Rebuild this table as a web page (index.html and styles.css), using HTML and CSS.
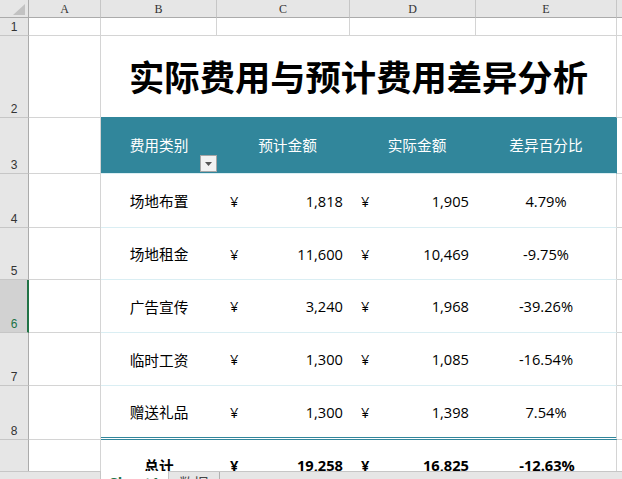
FILE: index.html
```html
<!DOCTYPE html>
<html lang="zh-CN">
<head>
<meta charset="utf-8">
<title>实际费用与预计费用差异分析</title>
<link rel="stylesheet" href="styles.css">
</head>
<body>
<div class="app">
  <div class="sheet">
    <div class="corner"><svg width="12" height="11" viewBox="0 0 12 11"><polygon points="12,0 12,11 0,11" fill="#c2c2c2"/></svg></div>
    <div class="ch">A</div>
    <div class="ch">B</div>
    <div class="ch">C</div>
    <div class="ch">D</div>
    <div class="ch">E</div>
    <div class="ch ch-f"></div>

    <div class="rh">1</div>
    <div class="c"></div>
    <div class="c"></div>
    <div class="c"></div>
    <div class="c"></div>
    <div class="c"></div>
    <div class="c f"></div>

    <div class="rh">2</div>
    <div class="c"></div>
    <div class="title">实际费用与预计费用差异分析</div>
    <div class="c f"></div>

    <div class="rh">3</div>
    <div class="c"></div>
    <div class="th th-b">费用类别<span class="filter"><svg width="7" height="4" viewBox="0 0 7 4"><polygon points="0,0 7,0 3.5,4" fill="#555"/></svg></span></div>
    <div class="th th-c">预计金额</div>
    <div class="th th-d">实际金额</div>
    <div class="th th-e">差异百分比</div>
    <div class="c f"></div>

    <div class="rh">4</div>
    <div class="c"></div>
    <div class="td name">场地布置</div>
    <div class="td money m-c"><span>¥</span><span>1,818</span></div>
    <div class="td money m-d"><span>¥</span><span>1,905</span></div>
    <div class="td pct">4.79%</div>
    <div class="c f"></div>

    <div class="rh">5</div>
    <div class="c"></div>
    <div class="td name">场地租金</div>
    <div class="td money m-c"><span>¥</span><span>11,600</span></div>
    <div class="td money m-d"><span>¥</span><span>10,469</span></div>
    <div class="td pct">-9.75%</div>
    <div class="c f"></div>

    <div class="rh sel">6</div>
    <div class="c"></div>
    <div class="td name">广告宣传</div>
    <div class="td money m-c"><span>¥</span><span>3,240</span></div>
    <div class="td money m-d"><span>¥</span><span>1,968</span></div>
    <div class="td pct">-39.26%</div>
    <div class="c f"></div>

    <div class="rh">7</div>
    <div class="c"></div>
    <div class="td name">临时工资</div>
    <div class="td money m-c"><span>¥</span><span>1,300</span></div>
    <div class="td money m-d"><span>¥</span><span>1,085</span></div>
    <div class="td pct">-16.54%</div>
    <div class="c f"></div>

    <div class="rh">8</div>
    <div class="c"></div>
    <div class="td last name">赠送礼品</div>
    <div class="td last money m-c"><span>¥</span><span>1,300</span></div>
    <div class="td last money m-d"><span>¥</span><span>1,398</span></div>
    <div class="td last pct">7.54%</div>
    <div class="c f"></div>

    <div class="rh">9</div>
    <div class="c"></div>
    <div class="td total name">总计</div>
    <div class="td total money m-c"><span>¥</span><span>19,258</span></div>
    <div class="td total money m-d"><span>¥</span><span>16,825</span></div>
    <div class="td total pct">-12.63%</div>
    <div class="c f"></div>
  </div>
  <div class="tabs">
    <div class="tab-active">Sheet1</div>
    <div class="tab">数据</div>
    <div class="tab-add"><svg width="12" height="12" viewBox="0 0 12 12"><circle cx="6" cy="6" r="5.2" fill="none" stroke="#777" stroke-width="1"/><path d="M6 3v6M3 6h6" stroke="#777" stroke-width="1"/></svg></div>
  </div>
</div>
</body>
</html>
```

FILE: styles.css
```css
body {
  margin: 0;
  font-family: "Noto Sans CJK SC", "Noto Sans", sans-serif;
  background: #fff;
}

.app {
  width: 622px;
  height: 479px;
  display: flex;
  flex-direction: column;
  overflow: hidden;
}

.sheet {
  flex: 0 0 471px;
  display: grid;
  grid-template-columns: 29px 72px 116px 133px 126px 141px 1fr;
  grid-template-rows: 18px 18px 82px 56px 54px 52px 53px 53px 54px 52px;
  overflow: hidden;
}

.sheet > div {
  box-sizing: border-box;
  min-width: 0;
}

.corner {
  background: #e6e6e6;
  border-right: 1px solid #ababab;
  border-bottom: 1px solid #ababab;
  display: flex;
  align-items: flex-end;
  justify-content: flex-end;
  padding: 0 3px 2px 0;
}

.ch {
  background: #e6e6e6;
  border-right: 1px solid #c6c6c6;
  border-bottom: 1px solid #ababab;
  font-family: "Liberation Serif", serif;
  font-size: 12px;
  color: #333;
  display: flex;
  align-items: center;
  justify-content: center;
  padding-top: 1px;
}

.ch-f {
  border-right: none;
}

.rh {
  background: #e6e6e6;
  border-right: 1px solid #ababab;
  border-bottom: 1px solid #c6c6c6;
  font-family: "Liberation Sans", sans-serif;
  font-size: 12px;
  color: #333;
  display: flex;
  align-items: flex-end;
  justify-content: center;
  padding-bottom: 1px;
  line-height: 14px;
}

.rh.sel {
  background: #d2d2d2;
  color: #217346;
  border-right: 2px solid #217346;
  padding-left: 1px;
}

.c {
  border-right: 1px solid #d4d4d4;
  border-bottom: 1px solid #d4d4d4;
}

.c.f {
  border-right: none;
}

.title {
  grid-column: span 4;
  border-right: 1px solid #d4d4d4;
  border-bottom: 1px solid #31869b;
  display: flex;
  align-items: center;
  justify-content: center;
  font-size: 35.3px;
  font-weight: 700;
  color: #000;
  padding-bottom: 2px;
}

.th {
  position: relative;
  background: #31869b;
  border-bottom: 1px solid #daeef3;
  color: #fff;
  font-size: 14.67px;
  display: flex;
  align-items: center;
  justify-content: center;
  padding-bottom: 2px;
}

.th-c,
.th-d {
  padding-left: 8px;
}

.th-e {
  border-right: 1px solid #31869b;
}

.filter {
  position: absolute;
  right: 0;
  bottom: 1px;
  width: 17px;
  height: 17px;
  box-sizing: border-box;
  background: #f2f2f2;
  border: 1px solid #a6a6a6;
  display: flex;
  align-items: center;
  justify-content: center;
}

.td {
  border-bottom: 1px solid #daeef3;
  font-family: "Open Sans", "Noto Sans CJK SC", sans-serif;
  font-size: 14.67px;
  color: #000;
  display: flex;
  align-items: center;
}

.td.name {
  font-family: "Noto Sans CJK SC", sans-serif;
  justify-content: center;
}

.td.pct {
  border-right: 1px solid #d4d4d4;
  justify-content: center;
}

.td.money {
  justify-content: space-between;
  padding-right: 7px;
}

.m-c {
  padding-left: 13px;
}

.m-d {
  padding-left: 11px;
}

.td.last {
  border-bottom: 3px double #31869b;
}

.td.total {
  font-weight: 700;
  border-bottom: 1px solid #daeef3;
  padding-bottom: 1px;
}

.td.total.pct {
  padding-left: 2px;
}

.tabs {
  flex: 1;
  background: #e6e6e6;
  border-top: 1px solid #c6c6c6;
  display: flex;
  align-items: flex-start;
  padding-left: 100px;
  font-size: 14.67px;
  line-height: 20px;
}

.tab-active {
  margin-top: -1px;
  width: 69px;
  height: 30px;
  box-sizing: border-box;
  background: #fff;
  border-left: 1px solid #c6c6c6;
  border-right: 1px solid #c6c6c6;
  color: #217346;
  font-weight: 700;
  text-align: center;
  padding-top: 1px;
  font-family: "Open Sans", "Noto Sans", sans-serif;
}

.tab {
  color: #444;
  padding: 1px 11px 0 10px;
  border-right: 1px solid #b0b0b0;
  height: 30px;
}

.tab-add {
  padding: 4px 0 0 37px;
}
```
